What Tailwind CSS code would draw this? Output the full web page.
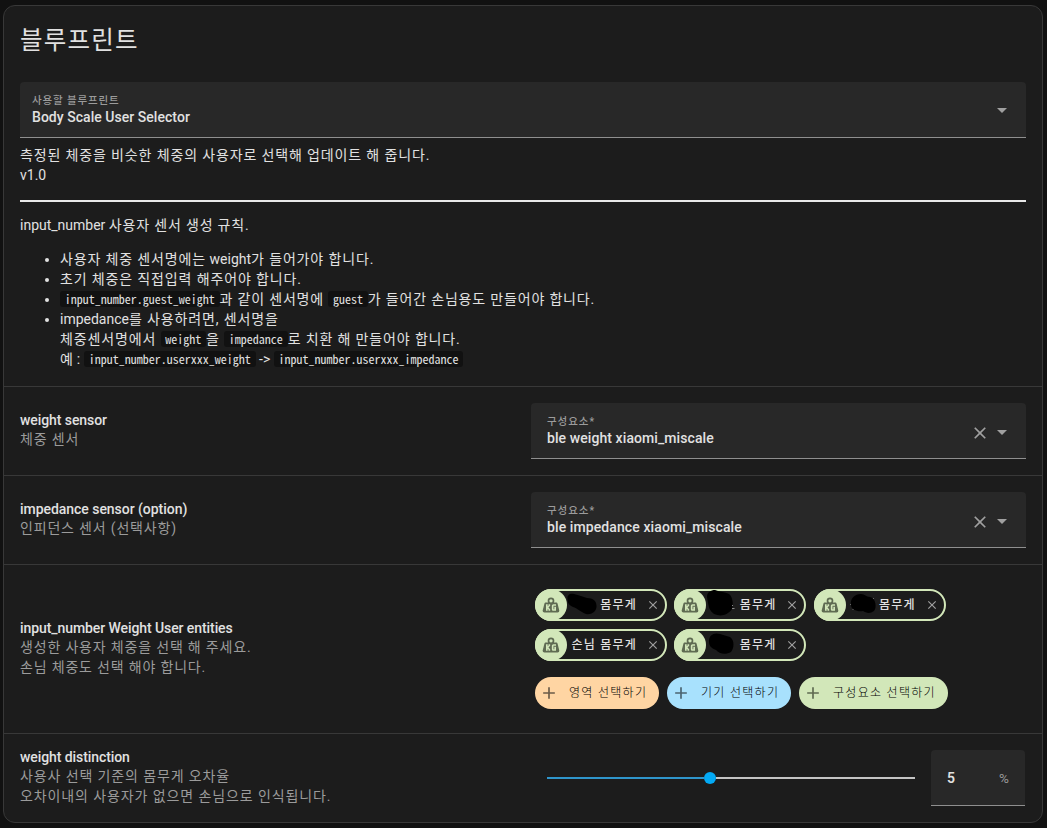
<!DOCTYPE html>
<html lang="ko">
<head>
<meta charset="utf-8">
<title>블루프린트</title>
<script src="https://cdn.jsdelivr.net/npm/@tailwindcss/browser@4"></script>
</head>
<body class="bg-[#111111] w-[1047px] h-[828px] overflow-hidden pt-[5px] pl-[3px] font-['Roboto','Noto_Sans_CJK_KR',sans-serif] text-[14px] leading-5 text-[#e1e1e1]">
<svg class="hidden">
  <symbol id="kg" viewBox="0 0 24 24"><path d="M12,3A4,4 0 0,1 16,7C16,7.73 15.81,8.41 15.46,9H18C18.95,9 19.75,9.67 19.95,10.56C21.96,18.57 22,18.78 22,19A2,2 0 0,1 20,21H4A2,2 0 0,1 2,19C2,18.78 2.04,18.57 4.05,10.56C4.25,9.67 5.05,9 6,9H8.54C8.19,8.41 8,7.73 8,7A4,4 0 0,1 12,3M12,5A2,2 0 0,0 10,7A2,2 0 0,0 12,9A2,2 0 0,0 14,7A2,2 0 0,0 12,5M6,11V19H8V16.5L9,17.5V19H11V17L9,15L11,13V11H9V12.5L8,13.5V11H6M15,11C13.89,11 13,11.89 13,13V17C13,18.11 13.89,19 15,19H18V14H16V17H15V13H18V11H15Z"/></symbol>
  <symbol id="close" viewBox="0 0 24 24"><path d="M19,6.41L17.59,5L12,10.59L6.41,5L5,6.41L10.59,12L5,17.59L6.41,19L12,13.41L17.59,19L19,17.59L13.41,12L19,6.41Z"/></symbol>
  <symbol id="plus" viewBox="0 0 24 24"><path d="M19,13H13V19H11V13H5V11H11V5H13V11H19V13Z"/></symbol>
</svg>
<main class="w-[1040px] h-[818px] rounded-xl border border-[#383838] bg-[#1c1c1c] flex flex-col overflow-hidden">
  <section class="h-[380px] px-4 flex flex-col">
    <h1 class="h-[76px] pt-[19px] text-[24.5px] leading-8 tracking-[1.2px]">블루프린트</h1>
    <div class="h-14 shrink-0 rounded-t bg-[#282828] border-b border-[#8f8f8f] flex items-center justify-between pl-3 pr-[19px]">
      <div class="pt-[1px]">
        <div class="pt-[1px] text-[10.5px] leading-[13px] font-medium text-[#9b9b9b] tracking-[0.85px]">사용할 블루프린트</div>
        <div class="leading-5 font-medium tracking-[0.04px]">Body Scale User Selector</div>
      </div>
      <svg class="w-[10px] h-[5px] mt-[2px] fill-[#a0a0a0]" viewBox="0 0 10 5"><path d="M0 0H10L5 5Z"/></svg>
    </div>
    <p class="mt-[7px] tracking-[0.86px]">측정된 체중을 비슷한 체중의 사용자로 선택해 업데이트 해 줍니다.</p>
    <p>v1.0</p>
    <hr class="mt-[15px] h-[2px] shrink-0 border-0 bg-[#e8e8e8]">
    <p class="mt-[13px]">input_number <span class="tracking-[0.82px]">사용자 센서 생성 규칙.</span></p>
    <ul class="mt-[14px] pl-10 list-disc">
      <li class="h-5"><span class="tracking-[0.86px]">사용자 체중 센서명에는</span> weight<span class="tracking-[0.86px]">가 들어가야 합니다.</span></li>
      <li class="h-5 tracking-[0.86px]">초기 체중은 직접입력 해주어야 합니다.</li>
      <li class="h-5 tracking-[0.82px]"><code class="inline-block h-4 rounded-[3px] bg-[#111111] px-[4.76px] align-[0px] font-['Noto_Sans_Mono_CJK_KR','Liberation_Mono',monospace] text-[12px] leading-4 tracking-normal">input_number.guest_weight</code>과 같이 센서명에 <code class="inline-block h-4 rounded-[3px] bg-[#111111] px-[4.76px] align-[0px] font-['Noto_Sans_Mono_CJK_KR','Liberation_Mono',monospace] text-[12px] leading-4 tracking-normal">guest</code>가 들어간 손님용도 만들어야 합니다.</li>
      <li class="h-15">impedance<span class="tracking-[0.86px]">를 사용하려면, 센서명을</span><br>
        <span class="tracking-[0.86px]">체중센서명에서 <code class="inline-block h-4 rounded-[3px] bg-[#111111] px-[4.76px] align-[0px] font-['Noto_Sans_Mono_CJK_KR','Liberation_Mono',monospace] text-[12px] leading-4 tracking-normal">weight</code>을 <code class="inline-block h-4 rounded-[3px] bg-[#111111] px-[4.76px] align-[0px] font-['Noto_Sans_Mono_CJK_KR','Liberation_Mono',monospace] text-[12px] leading-4 tracking-normal">impedance</code>로 치환 해 만들어야 합니다.</span><br>
        <span class="tracking-[0.2px]">예 : </span><code class="inline-block h-4 rounded-[3px] bg-[#111111] px-[4.76px] align-[0px] font-['Noto_Sans_Mono_CJK_KR','Liberation_Mono',monospace] text-[12px] leading-4 tracking-normal">input_number.userxxx_weight</code> -&gt; <code class="inline-block h-4 rounded-[3px] bg-[#111111] px-[4.76px] align-[0px] font-['Noto_Sans_Mono_CJK_KR','Liberation_Mono',monospace] text-[12px] leading-4 tracking-normal">input_number.userxxx_impedance</code></li>
    </ul>
  </section>

  <section class="h-[89px] border-t border-[#383838] px-4 flex items-center justify-between">
    <div class="pb-[4px]">
      <div class="font-medium tracking-[-0.08px]">weight sensor</div>
      <div class="-mt-[1px] text-[#9b9b9b] tracking-[0.86px]">체중 센서</div>
    </div>
    <div class="w-[495px] h-14 rounded-t bg-[#282828] border-b border-[#8f8f8f] flex items-center pl-4 pr-[19px]">
      <div class="flex-1 pt-[1px]">
        <div class="pt-[1px] text-[10.5px] leading-[13px] font-medium text-[#9b9b9b] tracking-[0.95px]">구성요소*</div>
        <div class="leading-5 font-medium tracking-[0.08px]">ble weight xiaomi_miscale</div>
      </div>
      <svg class="w-5 h-5 mt-1 mr-[7px] fill-[#a0a0a0]"><use href="#close"/></svg>
      <svg class="w-[10px] h-[5px] mt-[3px] fill-[#a0a0a0]" viewBox="0 0 10 5"><path d="M0 0H10L5 5Z"/></svg>
    </div>
  </section>

  <section class="h-[89px] border-t border-[#383838] px-4 flex items-center justify-between">
    <div class="pb-[4px]">
      <div class="font-medium tracking-[-0.04px]">impedance sensor (option)</div>
      <div class="-mt-[1px] text-[#9b9b9b] tracking-[0.82px]">인피던스 센서 (선택사항)</div>
    </div>
    <div class="w-[495px] h-14 rounded-t bg-[#282828] border-b border-[#8f8f8f] flex items-center pl-4 pr-[19px]">
      <div class="flex-1 pt-[1px]">
        <div class="pt-[1px] text-[10.5px] leading-[13px] font-medium text-[#9b9b9b] tracking-[0.95px]">구성요소*</div>
        <div class="leading-5 font-medium tracking-[0.1px]">ble impedance xiaomi_miscale</div>
      </div>
      <svg class="w-5 h-5 mt-1 mr-[7px] fill-[#a0a0a0]"><use href="#close"/></svg>
      <svg class="w-[10px] h-[5px] mt-[3px] fill-[#a0a0a0]" viewBox="0 0 10 5"><path d="M0 0H10L5 5Z"/></svg>
    </div>
  </section>

  <section class="h-[169px] border-t border-[#383838] px-4 flex items-center justify-between">
    <div class="pb-[4px]">
      <div class="font-medium tracking-[-0.08px]">input_number Weight User entities</div>
      <div class="-mt-[1px] text-[#9b9b9b] tracking-[0.82px]">생성한 사용자 체중을 선택 해 주세요.</div>
      <div class="text-[#9b9b9b] tracking-[0.82px]">손님 체중도 선택 해야 합니다.</div>
    </div>
    <div class="w-[495px] pl-1 flex flex-col">
      <div class="flex flex-wrap gap-x-[7.4px] gap-y-2 w-[440px]">
        <div class="relative w-[132px] h-8 rounded-full border-2 border-[#d2e7b9] flex items-center justify-end">
          <span class="absolute -left-[2px] -top-[2px] size-8 rounded-full bg-[#d2e7b9] flex items-center justify-center"><svg class="size-5 fill-[#5f6b52]"><use href="#kg"/></svg></span>
          <svg class="absolute left-[30px] top-[2px] w-[30px] h-[24px]" viewBox="0 0 30 24"><path d="M0.500 6C0 2 3 0 7 1C12 2 16 4 20 5C26 5 30 8 29.500 14C29 19 24 22 19 21C14 19 10 15 6 14C2 12 0.500 10 0.500 6Z"/></svg>
          <span class="text-[12px] font-medium tracking-[1.2px]">몸무게</span>
          <svg class="size-[14px] ml-[9px] mr-[5px] fill-[#a0a0a0]"><use href="#close"/></svg>
        </div>
        <div class="relative w-[132px] h-8 rounded-full border-2 border-[#d2e7b9] flex items-center justify-end">
          <span class="absolute -left-[2px] -top-[2px] size-8 rounded-full bg-[#d2e7b9] flex items-center justify-center"><svg class="size-5 fill-[#5f6b52]"><use href="#kg"/></svg></span>
          <svg class="absolute left-[31px] -top-[1px] w-[30px] h-[28px]" viewBox="0 0 30 28"><path d="M0 7C0 2 4 0 8 0C13 2 18 2 22 4C26 7 26.500 15 25 19C21 25 14 27 7 24C2 20 2 17 1 13Z"/><path d="M25.500 15V16M25 18.500H27.500" stroke="#888" stroke-width="1"/></svg>
          <span class="text-[12px] font-medium tracking-[1.2px]">몸무게</span>
          <svg class="size-[14px] ml-[9px] mr-[5px] fill-[#a0a0a0]"><use href="#close"/></svg>
        </div>
        <div class="relative w-[132px] h-8 rounded-full border-2 border-[#d2e7b9] flex items-center justify-end">
          <span class="absolute -left-[2px] -top-[2px] size-8 rounded-full bg-[#d2e7b9] flex items-center justify-center"><svg class="size-5 fill-[#5f6b52]"><use href="#kg"/></svg></span>
          <svg class="absolute left-[34px] top-[2px] w-[28px] h-[24px]" viewBox="0 0 28 24"><path d="M1 12C0 5 5 1 11 1C15 1 16 4 20 4C26 5 27 15 24 18C20 21 16 20 13 18C8 19 1 17 1 12Z"/><path d="M0 11.500H1M23 5.500H24M2.500 16.500H3.500" stroke="#666" stroke-width="1"/></svg>
          <span class="text-[12px] font-medium tracking-[1.2px]">몸무게</span>
          <svg class="size-[14px] ml-[9px] mr-[5px] fill-[#a0a0a0]"><use href="#close"/></svg>
        </div>
        <div class="relative w-[132px] h-8 rounded-full border-2 border-[#d2e7b9] flex items-center justify-end">
          <span class="absolute -left-[2px] -top-[2px] size-8 rounded-full bg-[#d2e7b9] flex items-center justify-center"><svg class="size-5 fill-[#5f6b52]"><use href="#kg"/></svg></span>
          <span class="text-[12px] font-medium tracking-[1.2px]">손님 몸무게</span>
          <svg class="size-[14px] ml-[9px] mr-[5px] fill-[#a0a0a0]"><use href="#close"/></svg>
        </div>
        <div class="relative w-[132px] h-8 rounded-full border-2 border-[#d2e7b9] flex items-center justify-end">
          <span class="absolute -left-[2px] -top-[2px] size-8 rounded-full bg-[#d2e7b9] flex items-center justify-center"><svg class="size-5 fill-[#5f6b52]"><use href="#kg"/></svg></span>
          <svg class="absolute left-[32px] top-[1px] w-[28px] h-[24px]" viewBox="0 0 28 24"><path d="M1 9C1 3 6 0 12 2L22 5C27 8 26 17 23 20C18 23 11 22 8 18C3 16 1 14 1 9Z"/></svg>
          <span class="text-[12px] font-medium tracking-[1.2px]">몸무게</span>
          <svg class="size-[14px] ml-[9px] mr-[5px] fill-[#a0a0a0]"><use href="#close"/></svg>
        </div>
      </div>
      <div class="mt-4 flex gap-2 text-[12px] font-light text-black tracking-[1.3px] whitespace-nowrap">
        <div class="w-[124px] h-8 rounded-full bg-[#ffd5a3] flex items-center pl-1"><svg class="size-5 mr-[10px] fill-[#6b5b48]"><use href="#plus"/></svg>영역 선택하기</div>
        <div class="w-[124px] h-8 rounded-full bg-[#a8e1fd] flex items-center pl-1"><svg class="size-5 mr-[10px] fill-[#4b6470]"><use href="#plus"/></svg>기기 선택하기</div>
        <div class="w-[149px] h-8 rounded-full bg-[#d2e7b9] flex items-center pl-1"><svg class="size-5 mr-[10px] fill-[#5f6b52]"><use href="#plus"/></svg>구성요소 선택하기</div>
      </div>
    </div>
  </section>

  <section class="h-[89px] border-t border-[#383838] px-4 flex items-center justify-between">
    <div class="pb-[4px]">
      <div class="font-medium tracking-[-0.08px]">weight distinction</div>
      <div class="-mt-[1px] text-[#9b9b9b] tracking-[0.88px]">사용사 선택 기준의 몸무게 오차율</div>
      <div class="text-[#9b9b9b] tracking-[0.9px]">오차이내의 사용자가 없으면 손님으로 인식됩니다.</div>
    </div>
    <div class="w-[495px] flex items-center pl-4">
      <div class="flex items-center w-[368px]">
        <div class="w-[157px] h-[2px] bg-[#2f95cb]"></div>
        <div class="size-3 rounded-full bg-[#03a9f4]"></div>
        <div class="flex-1 h-[2px] bg-[#c4c4c4]"></div>
      </div>
      <div class="ml-4 w-[94px] h-14 rounded-t bg-[#282828] border-b border-[#8f8f8f] flex items-center justify-between px-4">
        <span class="font-semibold">5</span><span class="text-[#9b9b9b] text-[13.5px]">%</span>
      </div>
    </div>
  </section>
</main>
</body>
</html>
